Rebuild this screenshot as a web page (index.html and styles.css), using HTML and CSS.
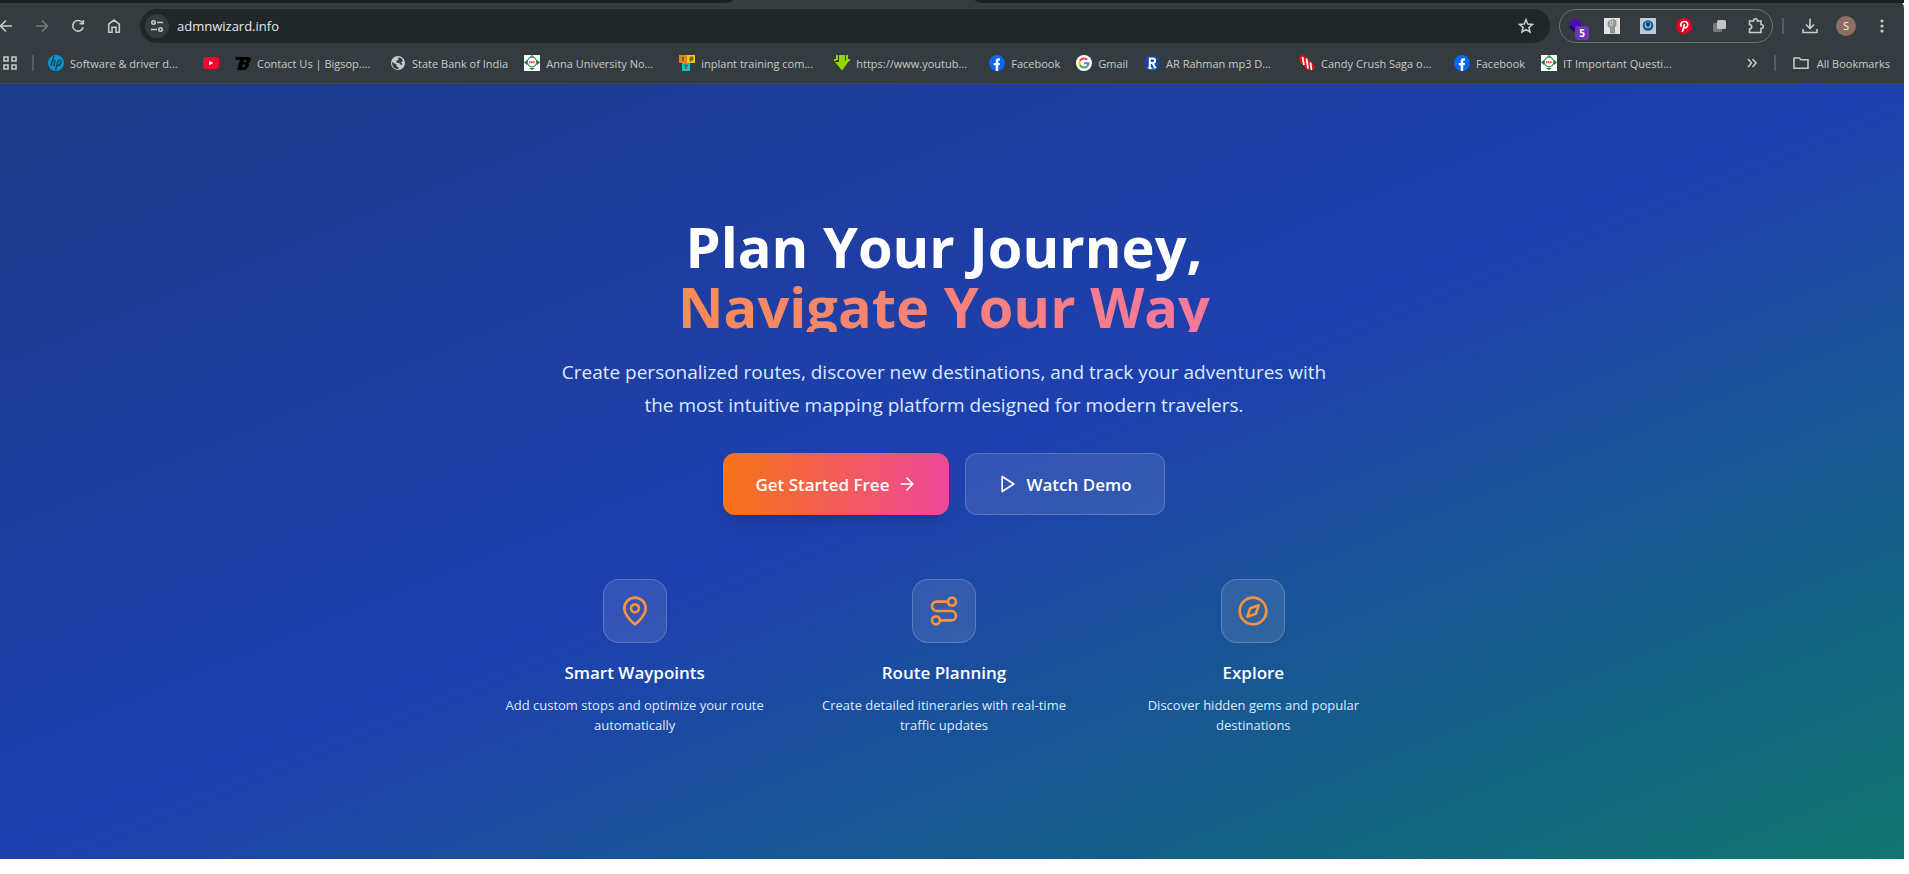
FILE: index.html
```html
<!DOCTYPE html>
<html>

<head>
    <meta charset="utf-8">
    <title>Plan Your Journey</title>
    <meta name="viewport" content="width=device-width, initial-scale=1">
    <link rel="stylesheet" href="styles.css">
</head>

<body>
    <div class="window">
        <header class="browser">
            <div class="tabStrip">
                <div class="tabsLeft"></div>
                <div class="tabsRight"></div>
            </div>

            <div class="toolbar">
                <nav class="navButtons">
                    <button class="toolButton" aria-label="Back">
                        <svg width="16" height="16" viewBox="0 0 16 16"><path d="M14 8H3M8 2.500L2.500 8L8 13.500" /></svg>
                    </button>
                    <button class="toolButton disabled" aria-label="Forward">
                        <svg width="16" height="16" viewBox="0 0 16 16"><path d="M2 8H13M8 2.500L13.500 8L8 13.500" /></svg>
                    </button>
                    <button class="toolButton" aria-label="Reload">
                        <svg width="16" height="16" viewBox="0 0 16 16"><path d="M12.600 5A5.300 5.300 0 1 0 13.200 9.200M13.300 2V5.800H9.500" /></svg>
                    </button>
                    <button class="toolButton" aria-label="Home">
                        <svg width="16" height="16" viewBox="0 0 16 16"><path d="M2.700 14.200V6.200L8 2L13.300 6.200V14.200H10V9.300H6V14.200Z" /></svg>
                    </button>
                </nav>

                <div class="addressBar">
                    <button class="siteInfo" aria-label="Site information">
                        <svg width="14" height="14" viewBox="0 0 14 14"><circle cx="3.500" cy="3.500" r="1.700" /><path d="M7 3.500H13M1 10.500H7" /><circle cx="10.500" cy="10.500" r="1.700" /></svg>
                    </button>
                    <input class="address" type="text" value="admnwizard.info" aria-label="Address">
                    <button class="star" aria-label="Bookmark this tab">
                        <svg width="16" height="16" viewBox="0 0 16 16"><path d="M8 1.800L9.800 6.100L14.400 6.500L10.900 9.500L12 14L8 11.600L4 14L5.100 9.500L1.600 6.500L6.200 6.100Z" /></svg>
                    </button>
                </div>

                <div class="extensions">
                    <button class="toolButton stack" aria-label="Extension">
                        <svg class="flat" width="20" height="16" viewBox="0 0 20 16"><path fill="#1c0a66" d="M2 9L10 5L18 9L10 15Z" /><path fill="#4b0db0" d="M2 5L9 0L17 5L10 11Z" /></svg>
                        <span class="count">5</span>
                    </button>
                    <button class="toolButton" aria-label="Extension">
                        <svg class="flat" width="16" height="16" viewBox="0 0 16 16"><rect width="16" height="16" fill="#e2e2e2" /><path fill="#999" stroke="#777" stroke-width=".6" d="M4 4L6 2.500L10 1.500L12 3V7L10.500 9.500V15H6.500V10L4 8Z" /><path stroke="#eee" stroke-width=".7" d="M6.500 3V5.500M8.500 2.500V5.500M5 7H9" /></svg>
                    </button>
                    <button class="toolButton" aria-label="Extension">
                        <svg class="flat" width="16" height="16" viewBox="0 0 16 16"><rect width="16" height="16" fill="#b8cedf" /><circle cx="8" cy="7.500" r="5.300" fill="#1d5585" /><circle cx="8" cy="7" r="3.300" fill="#8cc3e6" /><path fill="#123d66" d="M6 4.500H10V7L8 9.500L6 7Z" /></svg>
                    </button>
                    <button class="toolButton" aria-label="Pinterest">
                        <svg class="flat" width="16" height="16" viewBox="0 0 16 16"><circle cx="8" cy="8" r="8" fill="#e60023" /><path fill="none" stroke="#fff" stroke-width="1.600" d="M5.300 8.800C3.500 5.500 6 3.500 8.400 3.500C11 3.500 12.100 5.300 11.600 7.500C11 10 8.400 10.500 7.700 9.100M8.500 6L6.300 14" /></svg>
                    </button>
                    <button class="toolButton" aria-label="Extension">
                        <svg class="flat" width="16" height="16" viewBox="0 0 16 16"><rect x="1" y="5" width="9" height="9" rx="1.500" fill="#777b7d" /><rect x="5" y="2" width="9" height="9" rx="1.500" fill="#c2c4c5" /></svg>
                    </button>
                    <button class="toolButton" aria-label="Extensions">
                        <svg width="18" height="18" viewBox="0 0 18 18"><path d="M2.500 4H6.500C6.500 1 10.500 1 10.500 4H14V7.500C17 7.500 17 11.500 14 11.500V15.500H2.500V12C5.500 11.500 5.500 8 2.500 7.500Z" /></svg>
                    </button>
                </div>

                <div class="divider"></div>

                <div class="profile">
                    <button class="toolButton" aria-label="Downloads">
                        <svg width="18" height="18" viewBox="0 0 18 18"><path d="M9 1.500V11M5 7.500L9 11.500L13 7.500M2 12V15.500H16V12" /></svg>
                    </button>
                    <button class="toolButton" aria-label="Profile"><span class="avatar">S</span></button>
                    <button class="toolButton" aria-label="Menu">
                        <svg class="flat" width="16" height="16" viewBox="0 0 16 16"><g fill="#c7cacb"><circle cx="8" cy="3" r="1.600" /><circle cx="8" cy="8" r="1.600" /><circle cx="8" cy="13" r="1.600" /></g></svg>
                    </button>
                </div>
            </div>

            <nav class="bookmarks">
                <button class="apps" aria-label="Apps">
                    <svg width="14" height="14" viewBox="0 0 14 14"><path d="M1 1H5V5H1ZM9 1H13V5H9ZM1 9H5V13H1ZM9 9H13V13H9Z" /></svg>
                </button>
                <div class="divider"></div>
                <div class="links">
                    <a class="bookmark" href="#">
                        <svg width="16" height="16" viewBox="0 0 16 16"><circle cx="8" cy="8" r="8" fill="#0096d6" /><path fill="none" stroke="#263a44" stroke-width="1.300" d="M6 1L2.800 11M4.300 6.500C6.500 4.500 7.500 5.500 6.800 7.500L5.700 11M10.500 5L7.500 15M10.300 5.500C13 4.500 13.500 5.500 12.700 8C12 10.500 11 11 9 10.500" /></svg>
                        <span class="long">Software &amp; driver d...</span>
                    </a>
                    <a class="bookmark" href="#" aria-label="YouTube">
                        <svg width="16" height="16" viewBox="0 0 16 16"><rect y="2" width="16" height="12" rx="3" fill="#ff0033" /><path fill="#fff" d="M6.200 5.700V10.300L10.300 8Z" /></svg>
                    </a>
                    <a class="bookmark" href="#">
                        <svg width="16" height="16" viewBox="0 0 16 16"><path fill="#000" fill-rule="evenodd" d="M0 2H14L16 4L14.500 7.500L13.300 8L14 9.500L12.500 13L10 15H2L5 5H1ZM9 5L8.300 7H11L11.700 5ZM7.700 9.500L6.900 12H9.800L10.600 9.500Z" /></svg>
                        <span class="long">Contact Us | Bigsop....</span>
                    </a>
                    <a class="bookmark" href="#">
                        <svg width="16" height="16" viewBox="0 0 16 16"><circle cx="8" cy="8" r="7" fill="#c7cacb" /><path fill="#353c3f" d="M2 7L6.500 9.500V11L8.500 12.500V14C5 14.500 2 12 2 7ZM8 2.500L11 3L13 5.500L11 7.500L12.500 9L11 10.500L10 8.500L6.500 7.500V5.500L8.500 5Z" /></svg>
                        <span>State Bank of India</span>
                    </a>
                    <a class="bookmark" href="#">
                        <svg width="16" height="16" viewBox="0 0 16 16"><rect width="16" height="16" fill="#fff" /><circle cx="8" cy="7" r="4.800" fill="none" stroke="#3b8c4c" stroke-width="1.200" /><path fill="#157a2d" d="M6 1.500L8 0L10 2ZM0 7.500L3 5V10ZM16 7.500L13 5V10ZM5 13L8 15L11 13Z" /><path stroke="#e0523f" stroke-width="2" stroke-dasharray="1.500 .4" d="M5 7.300H11" /></svg>
                        <span class="long">Anna University No...</span>
                    </a>
                    <a class="bookmark" href="#">
                        <svg width="16" height="16" viewBox="0 0 16 16"><rect width="8" height="8" fill="#f57c13" /><rect x="8" width="8" height="8" fill="#ffc400" /><rect x="3" y="8" width="8" height="8" fill="#00c8c8" /><path fill="none" stroke="#5d5a2c" d="M4 2V6M11.500 6.500V2.500H13.500V4.500H11.500M5 10.500H9M7 10.500V14" /></svg>
                        <span class="long">inplant training com...</span>
                    </a>
                    <a class="bookmark" href="#">
                        <svg width="16" height="16" viewBox="0 0 16 16"><path fill="#93d500" d="M2 0H4V5H2V6H0V4H2ZM5 0H11V6H15L8 15.500L1 7H5ZM12 0H14V4H16V6H12Z" /></svg>
                        <span class="long">https://www.youtub...</span>
                    </a>
                    <a class="bookmark" href="#">
                        <svg width="16" height="16" viewBox="0 0 16 16"><circle cx="8" cy="8" r="8" fill="#0866ff" /><path fill="#fff" d="M6.700 16V10.300H4.800V7.900H6.700V6.300C6.700 3.800 8 3 11 3.400V5.500C9.500 5.400 9.200 5.700 9.200 6.600V7.900H11L10.600 10.300H9.200V16Z" /></svg>
                        <span>Facebook</span>
                    </a>
                    <a class="bookmark" href="#">
                        <svg width="16" height="16" viewBox="0 0 16 16"><circle cx="8" cy="8" r="8" fill="#fff" /><g fill="none" stroke-width="2"><path stroke="#ea4335" d="M4.100 5.700A4.500 4.500 0 0 1 11.200 4.800" /><path stroke="#fbbc05" d="M4.100 10.300A4.500 4.500 0 0 1 4.100 5.700" /><path stroke="#34a853" d="M11 11.400A4.500 4.500 0 0 1 4.100 10.300" /><path stroke="#4285f4" d="M8 8.200H12.500A4.500 4.500 0 0 1 11 11.400" /></g></svg>
                        <span>Gmail</span>
                    </a>
                    <a class="bookmark" href="#">
                        <svg width="16" height="16" viewBox="0 0 16 16"><circle cx="8" cy="8" r="8" fill="#17459b" /><path fill="#2a8bc0" d="M2 12A8 8 0 0 0 14 12Z" /><path fill="none" stroke="#fff" stroke-width="2" d="M5.800 13V3.500H8.500C12 3.500 12 8 8.500 8H6M8.500 8L11.500 13M4.500 13H7.500" /></svg>
                        <span class="long">AR Rahman mp3 D...</span>
                    </a>
                    <a class="bookmark" href="#">
                        <svg width="16" height="16" viewBox="0 0 16 16"><path fill="#e5131b" d="M0 2L3 0L6 1.500L14 9L16 13L12 15.500L8 14.500L1 7Z" /><path stroke="#fff" stroke-width="1.700" d="M3.500 2L5 10M7.500 3.500L9 13.500M11.500 7.500L12.500 15" /></svg>
                        <span class="long">Candy Crush Saga o...</span>
                    </a>
                    <a class="bookmark" href="#">
                        <svg width="16" height="16" viewBox="0 0 16 16"><circle cx="8" cy="8" r="8" fill="#0866ff" /><path fill="#fff" d="M6.700 16V10.300H4.800V7.900H6.700V6.300C6.700 3.800 8 3 11 3.400V5.500C9.500 5.400 9.200 5.700 9.200 6.600V7.900H11L10.600 10.300H9.200V16Z" /></svg>
                        <span>Facebook</span>
                    </a>
                    <a class="bookmark" href="#">
                        <svg width="16" height="16" viewBox="0 0 16 16"><rect width="16" height="16" fill="#fff" /><circle cx="8" cy="7" r="4.800" fill="none" stroke="#3b8c4c" stroke-width="1.200" /><path fill="#157a2d" d="M6 1.500L8 0L10 2ZM0 7.500L3 5V10ZM16 7.500L13 5V10ZM5 13L8 15L11 13Z" /><path stroke="#e0523f" stroke-width="2" stroke-dasharray="1.500 .4" d="M5 7.300H11" /></svg>
                        <span class="long">IT Important Questi...</span>
                    </a>
                </div>
                <button class="more" aria-label="More bookmarks">
                    <svg width="12" height="12" viewBox="0 0 12 12"><path d="M2 2L5.500 6L2 10M6.500 2L10 6L6.500 10" /></svg>
                </button>
                <div class="divider"></div>
                <button class="allBookmarks">
                    <svg width="16" height="16" viewBox="0 0 16 16"><path d="M1 3V13.300H15V4.800H8L6.300 3Z" /></svg>
                    All Bookmarks
                </button>
            </nav>
        </header>

        <main class="hero">
            <h1 class="title">Plan Your Journey, <span class="accent">Navigate Your Way</span></h1>
            <p class="intro">Create personalized routes, discover new destinations, and track your adventures with the most intuitive mapping platform designed for modern travelers.</p>

            <div class="actions">
                <button class="button primary">
                    Get Started Free
                    <svg width="20" height="20" viewBox="0 0 24 24"><path d="M5 12h14M12 5l7 7-7 7" /></svg>
                </button>
                <button class="button secondary">
                    <svg width="20" height="20" viewBox="0 0 24 24"><path d="M5 3l14 9-14 9z" /></svg>
                    Watch Demo
                </button>
            </div>

            <div class="features">
                <section class="feature">
                    <div class="featureIcon">
                        <svg width="32" height="32" viewBox="0 0 24 24"><path d="M20 10c0 6-8 12-8 12s-8-6-8-12a8 8 0 0 1 16 0Z" /><circle cx="12" cy="10" r="3" /></svg>
                    </div>
                    <h2>Smart Waypoints</h2>
                    <p>Add custom stops and optimize your route automatically</p>
                </section>
                <section class="feature">
                    <div class="featureIcon">
                        <svg width="32" height="32" viewBox="0 0 24 24"><circle cx="6" cy="19" r="3" /><path d="M9 19h8.500a3.500 3.500 0 0 0 0-7h-11a3.500 3.500 0 0 1 0-7H15" /><circle cx="18" cy="5" r="3" /></svg>
                    </div>
                    <h2>Route Planning</h2>
                    <p>Create detailed itineraries with real-time traffic updates</p>
                </section>
                <section class="feature">
                    <div class="featureIcon">
                        <svg width="32" height="32" viewBox="0 0 24 24"><circle cx="12" cy="12" r="10" /><path d="M16.240 7.760l-2.120 6.360-6.360 2.120 2.120-6.360z" /></svg>
                    </div>
                    <h2>Explore</h2>
                    <p>Discover hidden gems and popular destinations</p>
                </section>
            </div>
        </main>
    </div>
</body>

</html>
```

FILE: styles.css
```css
* {
    box-sizing: border-box;
}

body {
    background: white;
    font-family: "Open Sans", "Noto Sans", sans-serif;
    margin: 0;
}

h1, h2, p {
    margin: 0;
}

button {
    align-items: center;
    background: none;
    border: 0;
    color: inherit;
    cursor: pointer;
    display: flex;
    flex: none;
    font-family: inherit;
    justify-content: center;
    padding: 0;
}

svg {
    display: block;
    fill: none;
    flex: none;
}

.window {
    margin-right: 5px;
    overflow: hidden;
}

/* Browser chrome */

.browser {
    background: #353c3f;
    border-bottom: 1px solid #474747;
    border-top-right-radius: 8px;
    color: #c7cacb;
}

.browser svg:not(.flat) {
    stroke: #c7cacb;
    stroke-width: 1.6;
}

.browser .bookmark svg {
    stroke: none;
}

.tabStrip {
    display: flex;
    gap: 242px;
    height: 3px;
}

.tabsLeft {
    background: #1b2224;
    border-bottom-right-radius: 8px 3px;
    width: 733px;
}

.tabsRight {
    background: #1b2224;
    border-bottom-left-radius: 8px 3px;
    flex: 1;
}

.toolbar {
    align-items: center;
    display: flex;
    padding: 6px 4px 0 0;
}

.navButtons {
    display: flex;
    margin: 0 8px 0 -12px;
}

.toolButton {
    height: 34px;
    width: 36px;
}

.disabled {
    opacity: 0.45;
}

.addressBar {
    align-items: center;
    background: #1f2729;
    border-radius: 17px;
    display: flex;
    flex: 1;
    height: 34px;
    padding: 0 16px 0 5px;
}

.siteInfo {
    background: #353c3f;
    border-radius: 50%;
    height: 24px;
    width: 24px;
}

.address {
    background: none;
    border: 0;
    color: #e6e8e8;
    flex: 1;
    font-family: inherit;
    font-size: 13px;
    margin-left: 8px;
    outline: 0;
    padding: 0;
}

.extensions {
    border: 1px solid #6c7173;
    border-radius: 17px;
    display: flex;
    height: 34px;
    justify-content: center;
    margin: 0 9px;
    width: 214px;
}

.extensions .toolButton {
    height: 32px;
}

.stack {
    position: relative;
}

.count {
    background: #6a35b8;
    border-radius: 3px;
    bottom: 2px;
    color: white;
    font-size: 10px;
    font-weight: 700;
    line-height: 14px;
    position: absolute;
    right: 5px;
    width: 14px;
}

.divider {
    background: #555c5f;
    flex: none;
    height: 16px;
    width: 2px;
}

.profile {
    display: flex;
    margin-left: 8px;
}

.avatar {
    background: #8d6e63;
    border-radius: 50%;
    color: #f3edea;
    font-size: 11px;
    height: 20px;
    line-height: 20px;
    width: 20px;
}

.bookmarks {
    align-items: center;
    display: flex;
    font-size: 11px;
    height: 40px;
    padding: 0 14px 0 3px;
}

.apps {
    margin-right: 15px;
}

.links {
    display: flex;
    flex: 1;
    gap: 16px;
    margin-left: 14px;
    overflow: hidden;
}

.bookmark {
    align-items: center;
    color: inherit;
    display: flex;
    gap: 6px;
    text-decoration: none;
    white-space: nowrap;
}

.long {
    width: 117px;
}

.more {
    margin-right: 16px;
}

.allBookmarks {
    font-size: 11px;
    gap: 8px;
    margin-left: 17px;
}

/* Landing page */

.hero {
    align-items: center;
    background: linear-gradient(to bottom right, #1e3a8a, #1e40af, #0f766e);
    color: white;
    display: flex;
    flex-direction: column;
    padding: 128px 16px 124px 0;
    text-align: center;
}

.title {
    font-size: 56px;
    font-weight: 700;
    line-height: 60px;
    max-width: 896px;
    padding-top: 4px;
    width: 100%;
}

/* shorter than its line, so the descenders are cut */
.accent {
    background: linear-gradient(to right, #fb923c, #f472b6);
    background-clip: text;
    -webkit-background-clip: text;
    color: transparent;
    display: block;
    height: 56px;
}

.intro {
    color: #dbeafe;
    font-size: 19px;
    line-height: 33px;
    margin-top: 24px;
    max-width: 784px;
}

.actions {
    display: flex;
    gap: 16px;
    margin-top: 31px;
}

.button {
    border-radius: 12px;
    font-size: 17px;
    font-weight: 600;
    gap: 8px;
    height: 62px;
    padding: 0 32px;
}

.button svg,
.featureIcon svg {
    stroke: currentColor;
    stroke-linecap: round;
    stroke-linejoin: round;
    stroke-width: 2;
}

.primary {
    background: linear-gradient(to right, #f97316, #ec4899);
    box-shadow: 0 10px 15px -3px #0000001a, 0 4px 6px -4px #0000001a;
}

.secondary {
    background: #ffffff1a;
    border: 1px solid #ffffff33;
}

.features {
    display: grid;
    gap: 32px;
    grid-template-columns: repeat(3, 1fr);
    margin-top: 64px;
    max-width: 896px;
    width: 100%;
}

.feature {
    align-items: center;
    display: flex;
    flex-direction: column;
}

.featureIcon {
    align-items: center;
    background: #ffffff1a;
    border: 1px solid #ffffff33;
    border-radius: 16px;
    color: #fb923c;
    display: flex;
    height: 64px;
    justify-content: center;
    margin-bottom: 16px;
    width: 64px;
}

.feature h2 {
    font-size: 17px;
    font-weight: 600;
    line-height: 28px;
    margin-bottom: 8px;
}

.feature p {
    color: #dbeafe;
    font-size: 13px;
    line-height: 20px;
}
```
